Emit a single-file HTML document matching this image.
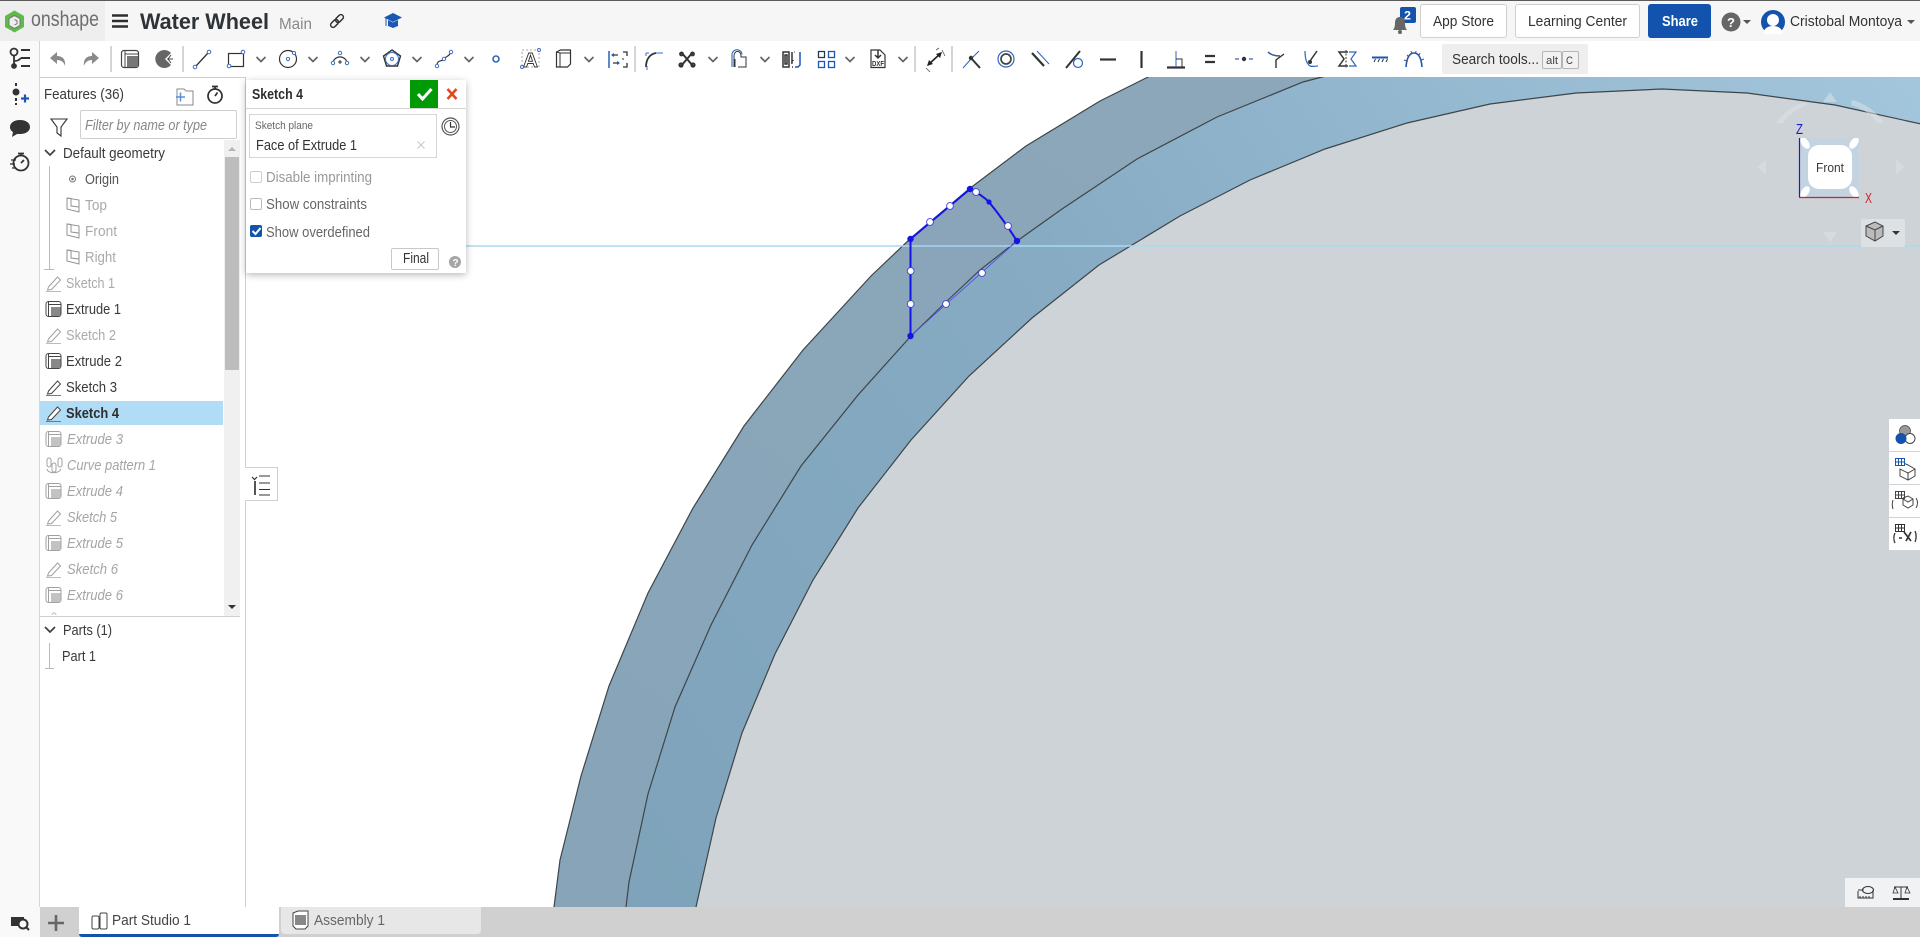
<!DOCTYPE html>
<html><head><meta charset="utf-8"><title>Water Wheel</title>
<style>
html,body{margin:0;padding:0;width:1920px;height:937px;overflow:hidden;background:#fff}
div{position:absolute;box-sizing:border-box}
svg{position:absolute;left:0;top:0}
text{font-family:"Liberation Sans",sans-serif;font-size:14.5px;fill:#3a3a3a}
</style></head><body>
<svg width="1920" height="937" viewBox="0 0 1920 937">
<defs>
<linearGradient id="gOuter" gradientUnits="userSpaceOnUse" x1="600" y1="900" x2="1150" y2="80"><stop offset="0" stop-color="#87a4b9"/><stop offset="1" stop-color="#8ca7b9"/></linearGradient>
<linearGradient id="gMid" gradientUnits="userSpaceOnUse" x1="650" y1="900" x2="1920" y2="80"><stop offset="0" stop-color="#7ea3ba"/><stop offset=".45" stop-color="#86abc3"/><stop offset="1" stop-color="#a3c6dc"/></linearGradient>
<clipPath id="cubeClip"><rect x="1800" y="138" width="59" height="59"/></clipPath>
</defs>
<polygon fill="url(#gOuter)" stroke="#3d4549" stroke-width="1.2" points="554,925 554,907 560,860 581,776 609,686 648,593 693,508 744,426 803,350 871,276 911,238 969,189 1026,146 1100,101 1148,77 1160,70 1921,70 1921,925"/>
<polygon fill="url(#gMid)" stroke="#3d4549" stroke-width="1.2" points="626,925 626,907 629,882 648,794 675,707 711,625 752,545 801,466 858,395 911,336 947,301 980,270 1017,241 1062,209 1137,159 1217,117 1303,82 1322,77 1345,70 1921,70 1921,925"/>
<polygon fill="#ced3d7" stroke="#3d4549" stroke-width="1.2" points="696,925 696,907 716,818 742,733 775,654 813,580 858,508 911,440 969,376 1032,318 1099,265 1180,216 1250,180 1325,149 1407,123 1490,104 1576,93 1662,89 1747,93 1835,105 1921,124 1921,925"/>
<line x1="245" y1="246" x2="1920" y2="246" stroke="#a9d9f2" stroke-width="1.4"/>
<!-- sketch -->
<polygon points="910,239 970,189 989,202 1017,241 910,336" fill="#8c8cc8" opacity=".06"/>
<path d="M910.5 336V239L970 189" fill="none" stroke="#1414e6" stroke-width="2"/>
<path d="M970 189Q982 195 989 202Q1003 219 1017 241" fill="none" stroke="#1414e6" stroke-width="2"/>
<path d="M910.5 336L1017 241" fill="none" stroke="#4a4ae0" stroke-width=".8"/>
<g fill="#1414e6"><circle cx="910.5" cy="239" r="3.2"/><circle cx="970" cy="189" r="3.2"/><circle cx="989" cy="202" r="2.6"/><circle cx="1017" cy="241" r="3.2"/><circle cx="910.5" cy="336" r="3.2"/></g>
<g fill="#fff" stroke="#4040e0" stroke-width=".9"><circle cx="930" cy="222" r="3.4"/><circle cx="950" cy="206" r="3.4"/><circle cx="976" cy="192" r="3.4"/><circle cx="1008" cy="226" r="3.4"/><circle cx="982" cy="273" r="3.4"/><circle cx="946" cy="304" r="3.4"/><circle cx="910.7" cy="271" r="3.4"/><circle cx="910.7" cy="304" r="3.4"/></g>
<!-- view cube -->
<g fill="#dbe3e8" opacity=".55">
<path d="M1830 92l7 10h-14z"/>
<path d="M1776 123c6-9 16-17 29-21l2 3c-11 4-19 10-24 18z"/>
<path d="M1852 100c14 4 25 12 32 23h-7c-6-9-14-14-26-18z"/>
<path d="M1766 160l-9 7 9 7z"/><path d="M1896 160l9 7-9 7z"/><path d="M1823 232h14l-7 10z"/>
</g>
<rect x="1800" y="138" width="59" height="59" fill="#c4d3e0"/>
<rect x="1808" y="145" width="44" height="44" rx="11" fill="#fff"/>
<g fill="#fff" clip-path="url(#cubeClip)"><ellipse cx="1805" cy="143" rx="3.6" ry="6.5" transform="rotate(-35 1805 143)"/><ellipse cx="1854" cy="143" rx="3.6" ry="6.5" transform="rotate(35 1854 143)"/><ellipse cx="1805" cy="192" rx="3.6" ry="6.5" transform="rotate(35 1805 192)"/><ellipse cx="1854" cy="192" rx="3.6" ry="6.5" transform="rotate(-35 1854 192)"/></g>
<line x1="1799.5" y1="138" x2="1799.5" y2="197" stroke="#1a1ad0" stroke-width="1.2"/><line x1="1799" y1="197.5" x2="1859" y2="197.5" stroke="#d82020" stroke-width="1.2"/>
<text x="1816" y="172" style="font-size:13px" textLength="28" lengthAdjust="spacingAndGlyphs">Front</text>
<text x="1796" y="134" style="font-size:15px;fill:#1a1ad0" textLength="7" lengthAdjust="spacingAndGlyphs">Z</text>
<text x="1865" y="203" style="font-size:15px;fill:#d82020" textLength="7" lengthAdjust="spacingAndGlyphs">X</text>
<rect x="1861" y="219" width="44" height="28" rx="2" fill="#dde1e4"/>
<path d="M1866 226l9-4 8 4v10l-8 5-9-5z" fill="#bbb" stroke="#444"/><path d="M1866 226l9 4 8-4M1875 230v11" fill="none" stroke="#444"/><path d="M1892 231h8l-4 4z" fill="#333"/>
</svg>

<!-- chrome -->
<div style="left:0;top:0;width:1920px;height:41px;background:#f6f6f6;border-top:1px solid #5a5a5a"></div>
<div style="left:0;top:1px;width:105px;height:40px;background:#eeeeee"></div>
<div style="left:41px;top:41px;width:1879px;height:36px;background:#fff"></div>
<div style="left:0;top:41px;width:40px;height:896px;background:#f9f9f9"></div>
<div style="left:39px;top:41px;width:1px;height:866px;background:#d6d6d6"></div>
<div style="left:40px;top:77px;width:206px;height:831px;background:#fff;border:1px solid #cfcfcf;border-left:none"></div>
<div style="left:80px;top:110px;width:157px;height:29px;background:#fff;border:1px solid #cfcfcf;border-radius:2px"></div>
<div style="left:224px;top:140px;width:16px;height:476px;background:#f0f0f0"></div>
<div style="left:225px;top:157px;width:14px;height:213px;background:#bdbdbd"></div>
<div style="left:40px;top:401px;width:183px;height:24px;background:#b0dcf5"></div>
<div style="left:40px;top:616px;width:200px;height:1px;background:#cfcfcf"></div>
<div style="left:245px;top:467px;width:33px;height:34px;background:#fff;border:1px solid #cfcfcf;border-left:none"></div>
<!-- dialog -->
<div style="left:246px;top:80px;width:220px;height:193px;background:#fff;box-shadow:0 2px 7px rgba(0,0,0,.28)"></div>
<div style="left:246px;top:108px;width:220px;height:1px;background:#d4d4d4"></div>
<div style="left:410px;top:80px;width:28px;height:28px;background:#009a06"></div>
<div style="left:249px;top:114px;width:188px;height:44px;border:1px solid #d6d6d6"></div>
<div style="left:250px;top:171px;width:12px;height:12px;border:1px solid #cfcfcf;border-radius:2px;background:#fff"></div>
<div style="left:250px;top:198px;width:12px;height:12px;border:1px solid #bbb;border-radius:2px;background:#fff"></div>
<div style="left:250px;top:225px;width:12px;height:12px;border-radius:2px;background:#1352ad"></div>
<div style="left:391px;top:248px;width:48px;height:22px;border:1px solid #c8c8c8;border-radius:2px;background:#fff"></div>
<!-- top buttons -->
<div style="left:1420px;top:4px;width:87px;height:34px;background:#fff;border:1px solid #cfcfcf;border-radius:3px"></div>
<div style="left:1515px;top:4px;width:125px;height:34px;background:#fff;border:1px solid #cfcfcf;border-radius:3px"></div>
<div style="left:1648px;top:4px;width:63px;height:34px;background:#1352ad;border-radius:3px"></div>
<div style="left:1400px;top:7px;width:16px;height:16px;background:#1352ad;border-radius:2px"></div>
<div style="left:1442px;top:44px;width:146px;height:30px;background:#eeeeee;border-radius:2px"></div>
<div style="left:1542px;top:51px;width:20px;height:18px;background:#f2f2f2;border:1px solid #b5b5b5;border-radius:2px"></div>
<div style="left:1562px;top:51px;width:17px;height:18px;background:#f2f2f2;border:1px solid #b5b5b5;border-radius:2px"></div>
<!-- right tools -->
<div style="left:1889px;top:419px;width:31px;height:32px;background:#fff"></div>
<div style="left:1889px;top:452px;width:31px;height:32px;background:#fff"></div>
<div style="left:1889px;top:485px;width:31px;height:32px;background:#fff"></div>
<div style="left:1889px;top:518px;width:31px;height:32px;background:#fff"></div>
<div style="left:1845px;top:878px;width:75px;height:30px;background:#f1f2f4"></div>
<!-- tabs -->
<div style="left:40px;top:907px;width:1880px;height:30px;background:#d0d0d0"></div>
<div style="left:79px;top:907px;width:200px;height:30px;background:#fff;border-bottom:3px solid #1352ad;border-radius:0 0 3px 3px"></div>
<div style="left:281px;top:907px;width:200px;height:27px;background:#e7e7e7;border-radius:0 0 4px 4px"></div>

<svg width="1920" height="937" viewBox="0 0 1920 937">
<defs>
<path id="ch" d="M-4.5-2L0 2.5 4.5-2" fill="none" stroke="#666" stroke-width="1.7"/>
<g id="ext"><rect x="-7.5" y="-7.5" width="15" height="15" rx="2.5" fill="#fff" stroke="#444" stroke-width="1"/><path d="M-5-7v14" stroke="#444" fill="none"/><path d="M-5-4.5H7" stroke="#444"/><rect x="-2.5" y="-2" width="9.5" height="9" fill="#888"/></g>
<g id="pen"><path d="M-5 4L4-6 7-3-2 6.5-6 7z" fill="#fff" stroke="#444" stroke-width="1"/><path d="M-7.5 8.5H7.5" stroke="#4a7fd0" stroke-width="1"/></g>
<g id="pl"><path d="M-6-7L6-5V7L-6 4z" fill="#fff" stroke="#777"/><path d="M-6-7L-2-6.5V1L6 2" fill="none" stroke="#777"/></g>
</defs>

<!-- top bar -->
<g><path d="M14.500 10.500l9.500 5.500v11l-9.500 5.500-9.500-5.500V16z" fill="#5dbb46"/><path d="M14.500 15.500l5.500 3v7l-5.500 3-5.500-3v-7z" fill="#eee" stroke="#777" stroke-width="1"/><path d="M14.500 19.500l2.500 1.200v3l-2.500 1.200" fill="none" stroke="#777"/></g>
<text x="31" y="26" style="font-size:21px;fill:#6d6d6d" textLength="68" lengthAdjust="spacingAndGlyphs">onshape</text>
<path d="M112 15.500h16M112 21h16M112 26.500h16" stroke="#2e2e2e" stroke-width="2.600"/>
<text x="140" y="29" style="font-size:22px;font-weight:700;fill:#2e3338" textLength="129" lengthAdjust="spacingAndGlyphs">Water Wheel</text>
<text x="279" y="29" style="font-size:16px;fill:#888" textLength="33" lengthAdjust="spacingAndGlyphs">Main</text>
<g fill="none" stroke="#333" stroke-width="1.500" transform="rotate(-45 337 21)"><rect x="329" y="18.500" width="9" height="5" rx="2.500"/><rect x="336" y="18.500" width="9" height="5" rx="2.500"/></g>
<path d="M393 13l9 4.500-9 4.500-9-4.500z" fill="#1a57b5"/><path d="M388 20v6l5 2 5-2v-6l-5 2.500z" fill="#1a57b5"/><path d="M386 18v8" stroke="#1a57b5"/>
<!-- right top -->
<path d="M1393 30c1-1 2-3 2-7 0-4 2-6 5-6s5 2 5 6c0 4 1 6 2 7z" fill="#666"/><circle cx="1400" cy="32" r="2" fill="#666"/>
<text x="1404" y="19.500" style="font-size:12px;font-weight:700;fill:#fff" textLength="7" lengthAdjust="spacingAndGlyphs">2</text>
<text x="1433" y="26" style="fill:#333" textLength="61" lengthAdjust="spacingAndGlyphs">App Store</text>
<text x="1528" y="26" style="fill:#333" textLength="99" lengthAdjust="spacingAndGlyphs">Learning Center</text>
<text x="1662" y="26" style="fill:#fff;font-weight:700" textLength="36" lengthAdjust="spacingAndGlyphs">Share</text>
<circle cx="1731" cy="22" r="9.500" fill="#666"/><text x="1727" y="27" style="font-size:13px;font-weight:700;fill:#fff">?</text><path d="M1743 20h8l-4 4z" fill="#555"/>
<circle cx="1773" cy="22" r="12" fill="#1352ad"/><circle cx="1773" cy="20" r="6" fill="#fff"/><path d="M1763 34c1-6 5-8 10-8s9 2 10 8z" fill="#fff"/>
<text x="1790" y="26" style="fill:#333" textLength="112" lengthAdjust="spacingAndGlyphs">Cristobal Montoya</text>
<path d="M1907 20h8l-4 4z" fill="#555"/>

<!-- left rail -->
<g fill="none" stroke="#333" stroke-width="1.800"><circle cx="14" cy="52" r="3.500"/><circle cx="14" cy="66" r="2" fill="#333"/><path d="M14 55v9M14 61c4 0 5-1 7-3"/><path d="M21 50h9M21 58h9M21 66h9" stroke-width="2"/></g>
<g fill="#333"><circle cx="16" cy="92" r="3.500"/><rect x="15" y="83" width="2" height="3"/><rect x="15" y="98" width="2" height="3"/><rect x="15" y="103" width="2" height="2"/></g><path d="M21 98.500h8M25 94.500v8" stroke="#1a57b5" stroke-width="2.200"/>
<path d="M20 120c6 0 10 3 10 7s-4 7-10 7c-1 0-2 0-3 0l-5 3 1-5c-2-1-3-3-3-5 0-4 4-7 10-7z" fill="#333"/>
<g fill="none" stroke="#333" stroke-width="1.800"><circle cx="21" cy="163" r="7.500"/><path d="M18 153.500h6M21 154v2M21 163l3-3" /><path d="M11 160h5M10 164h5M12 168h4" stroke-width="1.300"/></g>
<!-- bottom left search -->
<path d="M11 917h13v9H11z" fill="#333"/><circle cx="23" cy="924" r="4.500" fill="#f9f9f9" stroke="#333" stroke-width="2"/><path d="M26 927l3 3" stroke="#333" stroke-width="2"/>
<path d="M48 923h16M56 915v16" stroke="#666" stroke-width="2.600"/>

<!-- toolbar -->
<g>
<path d="M50 58l7-6v4c5 0 9 3 8 10-1-4-4-6-8-6v4z" fill="#8a8a8a"/>
<path d="M99 58l-7-6v4c-5 0-9 3-8 10 1-4 4-6 8-6v4z" fill="#8a8a8a"/>
<path d="M111 46v26M183 46v26M635 46v26M915 46v26M952 46v26" stroke="#d5d5d5" stroke-width="2"/>
<!-- extrude -->
<g fill="none" stroke="#444"><rect x="121.500" y="50.500" width="17" height="17" rx="2.500" fill="#fff" stroke-width="1.200"/><path d="M125 51v16M125 54h13"/></g><rect x="127" y="56" width="11" height="11" fill="#777"/>
<!-- revolve -->
<path d="M164 50a9 9 0 1 0 7 15l-6-6 6-6a9 9 0 0 0-7-3z" fill="#666"/><path d="M167 59h6M171 55l-3 4 3 4" fill="none" stroke="#444"/>
<!-- line -->
<path d="M196 66L208 53" stroke="#333" stroke-width="1.300"/><g fill="#fff" stroke="#3a6fc4"><circle cx="195" cy="67" r="1.800"/><circle cx="209" cy="52" r="1.800"/></g>
<!-- rect -->
<rect x="228.500" y="53.500" width="15" height="13" fill="none" stroke="#333" stroke-width="1.200"/><g fill="#fff" stroke="#3a6fc4"><circle cx="229" cy="66" r="1.800"/><circle cx="243" cy="52" r="1.800"/></g>
<use href="#ch" x="261" y="59"/>
<circle cx="288" cy="59" r="8.500" fill="none" stroke="#333" stroke-width="1.200"/><circle cx="288" cy="59" r="1.600" fill="#fff" stroke="#3a6fc4"/><circle cx="294" cy="53" r="1.600" fill="#fff" stroke="#3a6fc4"/>
<use href="#ch" x="313" y="59"/>
<path d="M333 62a7.500 8 0 0 1 14 0" fill="none" stroke="#333" stroke-width="1.200"/><g fill="#fff" stroke="#3a6fc4"><circle cx="340" cy="53" r="1.700"/><circle cx="333" cy="63" r="1.700"/><circle cx="347" cy="63" r="1.700"/></g><path d="M338 62h4M340 60v4" stroke="#333"/>
<use href="#ch" x="365" y="59"/>
<path d="M392 50l8.500 6-3 10h-11l-3-10z" fill="none" stroke="#333" stroke-width="1.400"/><circle cx="392" cy="59" r="6.500" fill="none" stroke="#3a6fc4"/><circle cx="392" cy="59" r="1.500" fill="#fff" stroke="#3a6fc4"/>
<use href="#ch" x="417" y="59"/>
<path d="M437 66c0-7 5-4 7-7 2-3 5-2 7-7" fill="none" stroke="#333" stroke-width="1.200"/><g fill="#fff" stroke="#3a6fc4"><circle cx="437" cy="66" r="1.700"/><circle cx="444" cy="59" r="1.700"/><circle cx="451" cy="52" r="1.700"/></g>
<use href="#ch" x="469" y="59"/>
<circle cx="496" cy="59" r="3" fill="#fff" stroke="#2e66bd" stroke-width="1.600"/>
<rect x="522" y="50" width="17" height="17" fill="none" stroke="#aaa" stroke-dasharray="2 2"/><text x="523" y="67" style="font-size:20px;font-weight:700;fill:#fff;stroke:#333;stroke-width:.9" textLength="15" lengthAdjust="spacingAndGlyphs">A</text><circle cx="522" cy="67" r="1.500" fill="#fff" stroke="#3a6fc4"/><circle cx="539" cy="50" r="1.500" fill="#fff" stroke="#3a6fc4"/>
<path d="M556.500 52l4-2h10v14l-3 3h-11z" fill="none" stroke="#333" stroke-width="1.200"/><path d="M560 67V53h10M556.500 52l3.500 1" fill="none" stroke="#333"/>
<use href="#ch" x="589" y="59"/>
<path d="M609 51v17" stroke="#1a57b5" stroke-width="1.400"/><path d="M613 55h5M613 63h5" fill="none" stroke="#333" stroke-width="1.200"/><path d="M611 55l3-2v4zM620 63l-3-2v4z" fill="#1a57b5"/><path d="M623 52h4v4M627 63v4h-4" fill="none" stroke="#333" stroke-width="1.300"/><path d="M622 59h2" stroke="#333"/>
<!-- fillet -->
<path d="M646 67c0-8 4-13 10-14" fill="none" stroke="#333" stroke-width="1.800"/><path d="M646 53h3M646 53v3M647 70v-4M656 53h7" stroke="#3a6fc4" fill="none"/>
<!-- trim -->
<g fill="none" stroke="#333" stroke-width="2"><path d="M681 52l12 14M693 52l-12 14"/><circle cx="681.500" cy="54" r="1.400"/><circle cx="692.500" cy="54" r="1.400"/><circle cx="681" cy="65" r="1.600"/><circle cx="693" cy="65" r="1.600"/></g>
<use href="#ch" x="713" y="59"/>
<path d="M734 67V56a3 4 0 0 1 7 0v1h5v10h-8" fill="none" stroke="#333"/><path d="M732 67V55a5 5 0 0 1 10-.5" fill="none" stroke="#1a57b5"/><path d="M735 67v-8" stroke="#333"/>
<use href="#ch" x="765" y="59"/>
<path d="M783 52h6v15h-6zM785 55h2v9h-2z" fill="none" stroke="#333" stroke-width="1.500"/><path d="M792 52v11h-1M792 67h1M793 60v1" stroke="#333" stroke-width="1.500" fill="none"/><path d="M800 52v13l-2 2h-3" fill="none" stroke="#1a57b5" stroke-width="1.500"/><path d="M794 52h1" stroke="#1a57b5"/>
<g fill="none" stroke="#1a57b5" stroke-width="1.300"><rect x="818.500" y="51.500" width="6" height="6"/><rect x="828.500" y="51.500" width="6" height="6"/><rect x="818.500" y="61.500" width="6" height="6"/><rect x="828.500" y="61.500" width="6" height="6"/></g>
<path d="M818.500 51.500h6v6h-6z" fill="none" stroke="#333"/>
<use href="#ch" x="850" y="59"/>
<path d="M871 50h9l5 5v12.500h-14z" fill="none" stroke="#333" stroke-width="1.200"/><path d="M878 50v8M875 55l3 3 3-3" fill="none" stroke="#333" stroke-width="1.500"/><text x="872" y="66" style="font-size:7px;font-weight:700;fill:#333" textLength="12" lengthAdjust="spacingAndGlyphs">DXF</text>
<use href="#ch" x="903" y="59"/>
<path d="M928 65l13-12" stroke="#222" stroke-width="1.600"/><path d="M927 66l2-6 4 4zM942 52l-6 2 4 4z" fill="#222"/><path d="M936 50l3-2M945 56l-3-6M926 68l4 4" fill="none" stroke="#555" stroke-width=".8"/>
<!-- constraints -->
<path d="M963 68l8-9M971 59l8-8" stroke="#2e66bd"/><path d="M971 58l9 10" stroke="#333" stroke-width="2"/><circle cx="971" cy="58" r="2.200" fill="#333"/>
<circle cx="1006" cy="59" r="8" fill="none" stroke="#2e66bd" stroke-width="1.200"/><circle cx="1006" cy="59" r="5" fill="none" stroke="#444" stroke-width="1.700"/>
<path d="M1032 53l12 13" stroke="#333" stroke-width="2.200"/><path d="M1037 51l12 13" stroke="#2e66bd"/>
<path d="M1066 68l14-17" stroke="#333" stroke-width="2"/><circle cx="1078" cy="63" r="4.500" fill="none" stroke="#2e66bd" stroke-width="1.200"/>
<path d="M1100 59.500h16" stroke="#333" stroke-width="2.200"/>
<path d="M1141.500 51v17" stroke="#333" stroke-width="2.200"/>
<path d="M1167 67.500h18" stroke="#333" stroke-width="2.200"/><path d="M1176 51v16" stroke="#2e66bd"/><path d="M1176 59h6v8" stroke="#333" fill="none"/>
<path d="M1205 56h10M1205 62h10" stroke="#333" stroke-width="2.200"/>
<path d="M1235 59h4M1249 59h4" stroke="#2e66bd" stroke-width="1.300"/><circle cx="1244" cy="59" r="2.200" fill="#333"/>
<path d="M1268 52c3 3 7 4 12 4M1276 68v-8l8-6" fill="none" stroke="#333" stroke-width="1.400"/><path d="M1268 52c3 3 7 4 12 4" fill="none" stroke="#2e66bd"/>
<path d="M1305 51c0 8 2 13 5 15 3 1 6 0 8 0" fill="none" stroke="#2e66bd" stroke-width="1.200"/><path d="M1310 61l7-10" stroke="#333" stroke-width="1.500"/><circle cx="1310" cy="62" r="2" fill="#333"/>
<path d="M1348 52h-9l5 7-5 7h9" fill="none" stroke="#333" stroke-width="1.500"/><path d="M1346 50v18" stroke="#333" stroke-dasharray="2 1.500"/><path d="M1349 52h7l-5 7 5 7h-7" fill="none" stroke="#2e66bd" stroke-width="1.200"/>
<path d="M1372 57.500h16" stroke="#1a57b5" stroke-width="2"/><path d="M1374 62l1.500-3M1378 62l1.500-3M1382 62l1.500-3M1386 62l1.500-3" stroke="#333"/>
<path d="M1406 67c1-12 5-14 8-14s7 2 8 14" fill="none" stroke="#1a57b5" stroke-width="1.600"/><path d="M1404 60l3 1M1407 55l2 2M1411 51l1 3M1416 51l-.5 3M1420 53l-1.500 3M1424 59l-3 1" stroke="#555"/>
<text x="1452" y="64" style="fill:#333" textLength="87" lengthAdjust="spacingAndGlyphs">Search tools...</text>
<text x="1546" y="64" style="font-size:11px;fill:#444" textLength="12" lengthAdjust="spacingAndGlyphs">alt</text>
<text x="1566" y="64" style="font-size:11px;fill:#444" textLength="7" lengthAdjust="spacingAndGlyphs">C</text>
</g>

<!-- feature panel -->
<text x="44" y="99" style="fill:#3a3a3a" textLength="80" lengthAdjust="spacingAndGlyphs">Features (36)</text>
<path d="M177 89h7l2 2h7v14h-16z" fill="none" stroke="#888"/><path d="M176 97h9M180.500 92.500v9" stroke="#5b8fd6" stroke-width="1.500"/>
<g fill="none" stroke="#2e2e2e" stroke-width="1.700"><circle cx="215" cy="96" r="7"/><path d="M212 86.500h6M215 87v2M215 96l2.500-3.500"/></g>
<path d="M51 119h16l-6 8v9l-4-3v-6z" fill="none" stroke="#333" stroke-width="1.100"/>
<text x="85" y="130" style="font-style:italic;fill:#888" textLength="122" lengthAdjust="spacingAndGlyphs">Filter by name or type</text>
<path d="M228 151l4-4 4 4z" fill="#b5b5b5"/><path d="M228 605h8l-4 4z" fill="#333"/>
<path d="M45 150l5 5 5-5" fill="none" stroke="#444" stroke-width="1.800"/>
<text x="63" y="158" textLength="102" lengthAdjust="spacingAndGlyphs">Default geometry</text>
<path d="M49.500 166v104M44 269.500h10" stroke="#bbb"/>
<circle cx="72.500" cy="179" r="3" fill="none" stroke="#777"/><circle cx="72.500" cy="179" r="1.300" fill="#777"/>
<text x="85" y="184" style="fill:#555" textLength="34" lengthAdjust="spacingAndGlyphs">Origin</text>
<g opacity=".8"><use href="#pl" x="73" y="205"/><use href="#pl" x="73" y="231"/><use href="#pl" x="73" y="257"/></g>
<text x="85" y="210" style="fill:#aaa" textLength="22" lengthAdjust="spacingAndGlyphs">Top</text>
<text x="85" y="236" style="fill:#aaa" textLength="32" lengthAdjust="spacingAndGlyphs">Front</text>
<text x="85" y="262" style="fill:#aaa" textLength="31" lengthAdjust="spacingAndGlyphs">Right</text>
<g opacity=".5"><use href="#pen" x="53.500" y="283"/><use href="#pen" x="53.500" y="335"/><use href="#pen" x="53.500" y="517"/><use href="#pen" x="53.500" y="569"/><use href="#ext" x="53.500" y="439"/><use href="#ext" x="53.500" y="491"/><use href="#ext" x="53.500" y="543"/><use href="#ext" x="53.500" y="595"/>
<g fill="none" stroke="#444"><rect x="47" y="458" width="4" height="9" rx="2"/><rect x="58" y="458" width="4" height="9" rx="2"/><rect x="52" y="463" width="4" height="9" rx="2"/><path d="M47 469c1 5 12 5 14 0"/></g></g>
<use href="#ext" x="53.500" y="309"/><use href="#ext" x="53.500" y="361"/><use href="#pen" x="53.500" y="387"/><use href="#pen" x="53.500" y="413"/>
<text x="66" y="288" style="fill:#aaa" textLength="49" lengthAdjust="spacingAndGlyphs">Sketch 1</text>
<text x="66" y="314" textLength="55" lengthAdjust="spacingAndGlyphs">Extrude 1</text>
<text x="66" y="340" style="fill:#aaa" textLength="50" lengthAdjust="spacingAndGlyphs">Sketch 2</text>
<text x="66" y="366" textLength="56" lengthAdjust="spacingAndGlyphs">Extrude 2</text>
<text x="66" y="392" textLength="51" lengthAdjust="spacingAndGlyphs">Sketch 3</text>
<text x="66" y="418" style="font-weight:700;fill:#2e2e2e" textLength="53" lengthAdjust="spacingAndGlyphs">Sketch 4</text>
<g font-style="italic">
<text x="67" y="444" style="fill:#a5a5a5" textLength="56" lengthAdjust="spacingAndGlyphs">Extrude 3</text>
<text x="67" y="470" style="fill:#a5a5a5" textLength="89" lengthAdjust="spacingAndGlyphs">Curve pattern 1</text>
<text x="67" y="496" style="fill:#a5a5a5" textLength="56" lengthAdjust="spacingAndGlyphs">Extrude 4</text>
<text x="67" y="522" style="fill:#a5a5a5" textLength="50" lengthAdjust="spacingAndGlyphs">Sketch 5</text>
<text x="67" y="548" style="fill:#a5a5a5" textLength="56" lengthAdjust="spacingAndGlyphs">Extrude 5</text>
<text x="67" y="574" style="fill:#a5a5a5" textLength="51" lengthAdjust="spacingAndGlyphs">Sketch 6</text>
<text x="67" y="600" style="fill:#a5a5a5" textLength="56" lengthAdjust="spacingAndGlyphs">Extrude 6</text>
</g>
<path d="M52 615a2 2 0 0 1 4 0" fill="none" stroke="#bbb"/>
<path d="M45 627l5 5 5-5" fill="none" stroke="#444" stroke-width="1.800"/>
<text x="63" y="635" textLength="49" lengthAdjust="spacingAndGlyphs">Parts (1)</text>
<text x="62" y="661" textLength="34" lengthAdjust="spacingAndGlyphs">Part 1</text>
<path d="M49.500 643v25M45 668.500h9" stroke="#bbb"/>
<path d="M252 477l2.500 2.500 2.500-2.500" fill="none" stroke="#333" stroke-width="1.200"/><path d="M259 476h11M259 483h11M259 489.500h11M259 495h11" stroke="#333"/><path d="M255 481v14" stroke="#555" stroke-width="2"/>

<!-- dialog text -->
<text x="252" y="99" style="font-weight:700;fill:#2e2e2e" textLength="51" lengthAdjust="spacingAndGlyphs">Sketch 4</text>
<path d="M418 94l4.500 5 9-10" fill="none" stroke="#fff" stroke-width="3"/>
<path d="M447.500 89l9 10M456.500 89l-9 10" stroke="#e2491c" stroke-width="2.600"/>
<text x="255" y="129" style="font-size:11px;fill:#666" textLength="58" lengthAdjust="spacingAndGlyphs">Sketch plane</text>
<text x="256" y="150" style="fill:#333" textLength="101" lengthAdjust="spacingAndGlyphs">Face of Extrude 1</text>
<path d="M417.500 141.500l7 7M424.500 141.500l-7 7" stroke="#c8c8c8"/>
<circle cx="450.500" cy="126.500" r="8.500" fill="none" stroke="#555" stroke-width="1.200"/><circle cx="450.500" cy="126.500" r="6" fill="none" stroke="#555"/><path d="M450.500 122v5h4.500" fill="none" stroke="#333" stroke-width="1.200"/>
<text x="266" y="182" style="fill:#999" textLength="106" lengthAdjust="spacingAndGlyphs">Disable imprinting</text>
<text x="266" y="209" style="fill:#666" textLength="101" lengthAdjust="spacingAndGlyphs">Show constraints</text>
<text x="266" y="237" style="fill:#666" textLength="104" lengthAdjust="spacingAndGlyphs">Show overdefined</text>
<path d="M252.500 231l3 3 5-6" fill="none" stroke="#fff" stroke-width="2"/>
<text x="403" y="263" style="fill:#333" textLength="26" lengthAdjust="spacingAndGlyphs">Final</text>
<circle cx="455" cy="262" r="6" fill="#a5a5a5"/><text x="452.500" y="266" style="font-size:10px;font-weight:700;fill:#fff">?</text>

<!-- right tools icons -->
<circle cx="1905" cy="431" r="5.500" fill="#999" stroke="#444" stroke-width=".7"/><circle cx="1910" cy="438.500" r="5" fill="#fff" stroke="#444"/><circle cx="1901" cy="438.500" r="5.500" fill="#1352ad"/>
<g fill="none"><path d="M1899 461l9 4 7 4v7l-7 4-8-4v-7l8 4 7-4" stroke="#444"/><path d="M1908 473v7" stroke="#444"/><rect x="1895.500" y="458.500" width="9" height="7" fill="#fff" stroke="#1a57b5"/><path d="M1895 462h10M1898.500 458v8M1901.500 458v8" stroke="#1a57b5"/></g>
<g fill="none" stroke="#444"><rect x="1895.500" y="491.500" width="9" height="7" fill="#fff"/><path d="M1895 495h10M1898.500 491v8M1901.500 491v8"/><path d="M1903 498l5-2 5 3v6l-5 3-5-3v-6l5 3 5-3M1893 500c-1 3-1 6 0 9M1916 498c2 3 2 7 0 10"/></g>
<g fill="none" stroke="#333"><rect x="1895.500" y="524.500" width="9" height="7"/><path d="M1895 528h10M1898.500 524v8M1901.500 524v8"/><path d="M1895 533c-1.500 3-1.500 7 0 10M1915 531c1.500 3 1.500 8 0 11" stroke-width="1.300"/><path d="M1899 538h3" stroke-width="1.500"/><path d="M1904 532l7 9M1911 532l-5 9" stroke-width="1.700"/></g>
<!-- measure -->
<g fill="none" stroke="#333"><ellipse cx="1868" cy="890" rx="5.500" ry="3.500"/><path d="M1858 890h5v-1M1858 891v7h15v-8"/><path d="M1860 898v-2M1863 898v-2M1866 898v-2M1869 898v-2"/></g>
<g fill="none" stroke="#333"><path d="M1894 887h14M1901 887v11M1893 899h16" /><path d="M1893 899h16" stroke-width="2"/><path d="M1895 887l-2 6h5zM1907 887l-2 6h5z" stroke-width=".8"/></g>

<!-- tabs -->
<g fill="#fff" stroke="#444"><rect x="92" y="916" width="7" height="13" rx="1.500"/><rect x="100" y="913" width="7" height="16" rx="1.500"/></g>
<text x="112" y="925" style="fill:#444" textLength="79" lengthAdjust="spacingAndGlyphs">Part Studio 1</text>
<path d="M293 913l5-2h10v15l-3 3h-9l-3-3z" fill="#fff" stroke="#444"/><rect x="295" y="915" width="11" height="10" fill="#888"/>
<text x="314" y="925" style="fill:#666" textLength="71" lengthAdjust="spacingAndGlyphs">Assembly 1</text>
</svg>
</body></html>
